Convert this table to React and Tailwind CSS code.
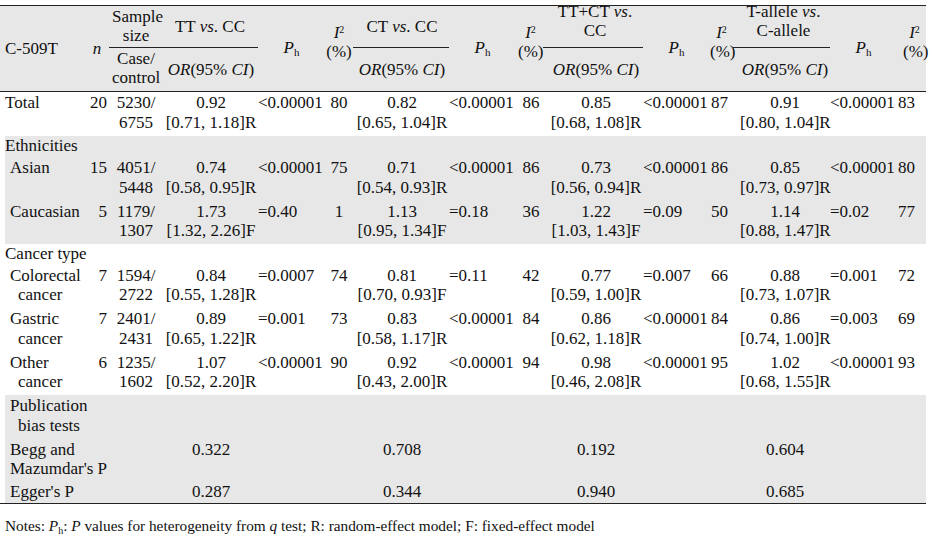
import React from "react";

const Ph = () => (
  <span>
    <i>P</i>
    <sub className="text-[11px] not-italic">h</sub>
  </span>
);

const I2 = () => (
  <>
    <div>
      <i>I</i>
      <sup className="text-[10px]">2</sup>
    </div>
    <div>(%)</div>
  </>
);

const OrHead = () => (
  <>
    <i>OR</i>(95% <i>CI</i>)
  </>
);

// data rows: label lines, n, sample size, then [OR, CI], Ph, I2 for each of the 4 models
const rows = [
  {
    label: ["Total"], top: true, n: "20", ss: ["5230/", "6755"],
    m: [
      ["0.92", "[0.71, 1.18]R", "<0.00001", "80"],
      ["0.82", "[0.65, 1.04]R", "<0.00001", "86"],
      ["0.85", "[0.68, 1.08]R", "<0.00001", "87"],
      ["0.91", "[0.80, 1.04]R", "<0.00001", "83"],
    ],
  },
  { heading: "Ethnicities", gray: true },
  {
    label: ["Asian"], gray: true, n: "15", ss: ["4051/", "5448"],
    m: [
      ["0.74", "[0.58, 0.95]R", "<0.00001", "75"],
      ["0.71", "[0.54, 0.93]R", "<0.00001", "86"],
      ["0.73", "[0.56, 0.94]R", "<0.00001", "86"],
      ["0.85", "[0.73, 0.97]R", "<0.00001", "80"],
    ],
  },
  {
    label: ["Caucasian"], gray: true, n: "5", ss: ["1179/", "1307"],
    m: [
      ["1.73", "[1.32, 2.26]F", "=0.40", "1"],
      ["1.13", "[0.95, 1.34]F", "=0.18", "36"],
      ["1.22", "[1.03, 1.43]F", "=0.09", "50"],
      ["1.14", "[0.88, 1.47]R", "=0.02", "77"],
    ],
  },
  { heading: "Cancer type" },
  {
    label: ["Colorectal", "cancer"], n: "7", ss: ["1594/", "2722"],
    m: [
      ["0.84", "[0.55, 1.28]R", "=0.0007", "74"],
      ["0.81", "[0.70, 0.93]F", "=0.11", "42"],
      ["0.77", "[0.59, 1.00]R", "=0.007", "66"],
      ["0.88", "[0.73, 1.07]R", "=0.001", "72"],
    ],
  },
  {
    label: ["Gastric", "cancer"], n: "7", ss: ["2401/", "2431"],
    m: [
      ["0.89", "[0.65, 1.22]R", "=0.001", "73"],
      ["0.83", "[0.58, 1.17]R", "<0.00001", "84"],
      ["0.86", "[0.62, 1.18]R", "<0.00001", "84"],
      ["0.86", "[0.74, 1.00]R", "=0.003", "69"],
    ],
  },
  {
    label: ["Other", "cancer"], n: "6", ss: ["1235/", "1602"],
    m: [
      ["1.07", "[0.52, 2.20]R", "<0.00001", "90"],
      ["0.92", "[0.43, 2.00]R", "<0.00001", "94"],
      ["0.98", "[0.46, 2.08]R", "<0.00001", "95"],
      ["1.02", "[0.68, 1.55]R", "<0.00001", "93"],
    ],
  },
];

const bias = [
  { label: ["Publication", "bias tests"], indent: true },
  { label: ["Begg and", "Mazumdar's P"], v: ["0.322", "0.708", "0.192", "0.604"] },
  { label: ["Egger's P"], v: ["0.287", "0.344", "0.940", "0.685"], last: true },
];

// per-model column tweaks
const orPad = ["pl-[4px]", "pl-[2px]", "pl-[6px]", "pl-[7px]"];
const iPad = ["", "pl-[3px]", "pr-[4px]", "pr-[10px]"];

const cell = "align-top pt-[1px] pb-[3.5px] whitespace-nowrap";
const grayFirst = "shadow-[inset_5px_0_0_#ffffff]";

function DataRow({ r }) {
  const bg = r.gray ? "bg-[#e7e7e7]" : "";
  return (
    <tr className={bg}>
      <td className={`${cell} ${r.gray ? grayFirst : ""} ${r.top ? "pl-[5px]" : "pl-[10px]"}`}>
        <div>{r.label[0]}</div>
        {r.label[1] && <div className="pl-[8px]">{r.label[1]}</div>}
      </td>
      <td className={`${cell} text-right pr-[2px]`}>{r.n}</td>
      <td className={`${cell} text-center pl-[3px]`}>
        <div>{r.ss[0]}</div>
        <div>{r.ss[1]}</div>
      </td>
      {r.m.map((m, i) => (
        <React.Fragment key={i}>
          <td className={`${cell} text-center ${orPad[i]}`}>
            <div>{m[0]}</div>
            <div>{m[1]}</div>
          </td>
          <td className={`${cell} text-left`}>{m[2]}</td>
          <td className={`${cell} text-center ${iPad[i]}`}>{m[3]}</td>
        </React.Fragment>
      ))}
    </tr>
  );
}

function HeadingRow({ r }) {
  return (
    <tr className={r.gray ? "bg-[#e7e7e7]" : ""}>
      <td
        colSpan={15}
        className={`align-top pl-[5px] whitespace-nowrap ${r.gray ? `${grayFirst} pt-[0px] pb-[2px]` : "pt-[0px] pb-[1px]"}`}
      >
        {r.heading}
      </td>
    </tr>
  );
}

function BiasRow({ r }) {
  const pad = r.last ? "align-top pt-[0px] pb-[1.5px] whitespace-nowrap" : cell;
  return (
    <tr className="bg-[#e7e7e7]">
      <td colSpan={3} className={`${pad} ${grayFirst} pl-[10px]`}>
        <div>{r.label[0]}</div>
        {r.label[1] && <div className={r.indent ? "pl-[8px]" : ""}>{r.label[1]}</div>}
      </td>
      {[0, 1, 2, 3].map((i) => (
        <React.Fragment key={i}>
          <td className={`${pad} text-center ${orPad[i]}`}>{r.v ? r.v[i] : ""}</td>
          <td className={pad}></td>
          <td className={pad}></td>
        </React.Fragment>
      ))}
    </tr>
  );
}

export default function App() {
  const th = "font-normal whitespace-nowrap";
  const line = "border-b border-[#222222]";
  const iHead = "align-middle text-center pb-[14px] leading-[19px]";
  return (
    <div className="min-h-screen bg-white pt-[5px] text-[#111111] font-['Liberation_Serif','Times_New_Roman',serif] text-[17px] leading-[19.5px]">
      <table className="w-[926px] table-fixed border-collapse border-t border-b border-[#222222]">
        <colgroup>
          {[88, 21, 51, 98, 67, 28, 96, 67, 27, 100, 67, 23, 97, 67, 29].map((w, i) => (
            <col key={i} style={{ width: w }} />
          ))}
        </colgroup>
        <thead className="bg-[#e7e7e7]">
          <tr className="h-[42px]">
            <th rowSpan={2} className={`${th} align-middle text-left pl-[5px]`}>C-509T</th>
            <th rowSpan={2} className={`${th} align-middle text-center pr-[3px] italic`}>n</th>
            <th className={`${th} ${line} align-bottom text-center pl-[3px] pb-[2px] leading-[19px]`}>
              Sample
              <br />
              size
            </th>
            <th className={`${th} ${line} align-middle text-center pl-[2px]`}>
              TT <i>vs</i>. CC
            </th>
            <th rowSpan={2} className={`${th} align-middle text-center pb-[2px]`}><Ph /></th>
            <th rowSpan={2} className={`${th} ${iHead}`}><I2 /></th>
            <th className={`${th} ${line} align-middle text-center pl-[2px]`}>
              CT <i>vs</i>. CC
            </th>
            <th rowSpan={2} className={`${th} align-middle text-center pb-[2px]`}><Ph /></th>
            <th rowSpan={2} className={`${th} ${iHead} pl-[2px]`}><I2 /></th>
            <th className={`${th} ${line} align-top text-center pl-[4px] leading-[19px]`}>
              <div className="-mt-[4px]">
                TT+CT <i>vs</i>.
                <br />
                CC
              </div>
            </th>
            <th rowSpan={2} className={`${th} align-middle text-center pb-[2px]`}><Ph /></th>
            <th rowSpan={2} className={`${th} ${iHead}`}><I2 /></th>
            <th className={`${th} ${line} align-top text-center pl-[4px] leading-[19px]`}>
              <div className="-mt-[4px]">
                T-allele <i>vs</i>.
                <br />
                C-allele
              </div>
            </th>
            <th rowSpan={2} className={`${th} align-middle text-center pb-[2px]`}><Ph /></th>
            <th rowSpan={2} className={`${th} ${iHead} pl-[6px]`}><I2 /></th>
          </tr>
          <tr className={`h-[44px] ${line}`}>
            <th className={`${th} align-top text-center pl-[3px] pt-[1px] leading-[19px]`}>
              Case/
              <br />
              control
            </th>
            <th className={`${th} align-middle text-center pl-[4px]`}><OrHead /></th>
            <th className={`${th} align-middle text-center pl-[2px]`}><OrHead /></th>
            <th className={`${th} align-middle text-center pl-[6px]`}><OrHead /></th>
            <th className={`${th} align-middle text-center pl-[7px]`}><OrHead /></th>
          </tr>
        </thead>
        <tbody>
          {rows.map((r, i) =>
            r.heading ? <HeadingRow key={i} r={r} /> : <DataRow key={i} r={r} />
          )}
          {bias.map((r, i) => (
            <BiasRow key={`b${i}`} r={r} />
          ))}
        </tbody>
      </table>
      <p className="mt-[13px] pl-[5px] text-[15.3px] leading-[18px]">
        Notes: <i>P</i>
        <sub className="text-[10px] not-italic">h</sub>: <i>P</i> values for heterogeneity from <i>q</i> test; R:
        random-effect model; F: fixed-effect model
      </p>
    </div>
  );
}
